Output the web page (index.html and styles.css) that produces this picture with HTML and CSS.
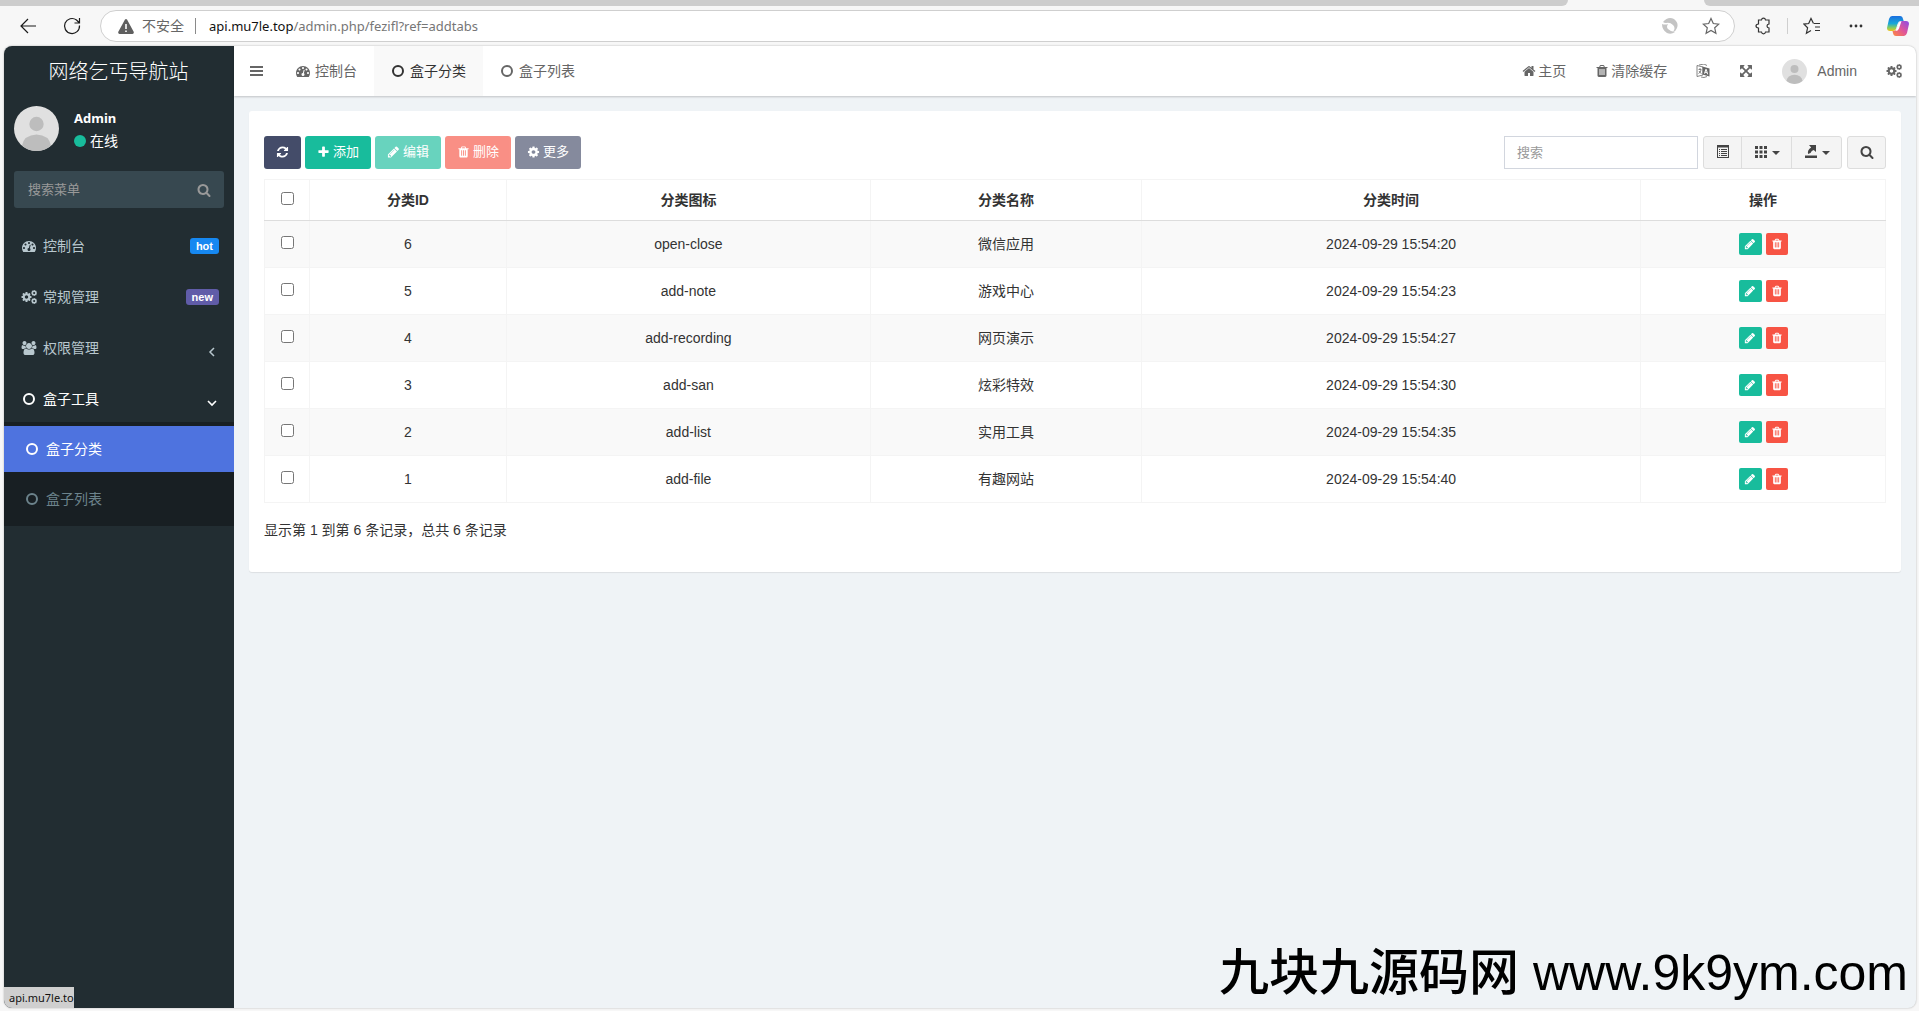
FILE: index.html
```html
<!DOCTYPE html>
<html lang="zh-CN">
<head>
<meta charset="utf-8">
<meta name="viewport" content="width=device-width, initial-scale=1">
<title>盒子分类</title>
<link rel="stylesheet" href="styles.css">
</head>
<body>
<svg class="sprite" aria-hidden="true">
  <symbol id="i-bars" viewBox="0 0 14 14"><path d="M0 2h13v2H0zM0 6h13v2H0zM0 10h13v2H0z"/></symbol>
  <symbol id="i-circle" viewBox="0 0 14 14"><circle cx="7" cy="7" r="5" fill="none" stroke="currentColor" stroke-width="2"/></symbol>
  <symbol id="i-dash" viewBox="0 0 1792 1792"><path d="M384 1152q0-53-37.500-90.500t-90.500-37.500-90.500 37.500-37.500 90.500 37.500 90.500 90.500 37.500 90.500-37.500 37.500-90.500zm192-448q0-53-37.500-90.500t-90.500-37.500-90.500 37.500-37.500 90.500 37.500 90.500 90.500 37.500 90.500-37.500 37.500-90.500zm428 481l101-382q6-26-7.500-48.500t-38.500-29.500-48 6.500-30 39.500l-101 382q-60 5-107 43.500t-63 98.500q-20 77 20 146t117 89 146-20 89-117q16-60-6-117t-72-91zm660-33q0-53-37.500-90.500t-90.500-37.500-90.500 37.500-37.500 90.500 37.500 90.500 90.500 37.500 90.500-37.500 37.500-90.500zm-640-640q0-53-37.500-90.500t-90.500-37.500-90.500 37.500-37.500 90.500 37.500 90.500 90.500 37.500 90.500-37.500 37.500-90.500zm448 192q0-53-37.500-90.500t-90.500-37.500-90.500 37.500-37.500 90.500 37.500 90.500 90.500 37.500 90.500-37.500 37.500-90.500zm320 448q0 261-141 483-19 29-54 29h-1402q-35 0-54-29-141-221-141-483 0-182 71-348t191-286 286-191 348-71 348 71 286 191 191 286 71 348z"/></symbol>
  <symbol id="i-cog" viewBox="0 0 1792 1792"><path id="gear" d="M1152 896q0-106-75-181t-181-75-181 75-75 181 75 181 181 75 181-75 75-181zm512-109v222q0 12-8 23t-20 13l-185 28q-19 54-39 91 35 50 107 138 10 12 10 25t-9 23q-27 37-99 108t-94 71q-12 0-26-9l-138-108q-44 23-91 38-16 136-29 186-7 28-36 28h-222q-14 0-24.500-8.500t-11.500-21.500l-28-184q-49-16-90-37l-141 107q-10 9-25 9-14 0-25-11-126-114-165-168-7-10-7-23 0-12 8-23 15-21 51-66.500t54-70.500q-27-50-41-99l-183-27q-13-2-21-12.500t-8-23.500v-222q0-12 8-23t19-13l186-28q14-46 39-92-40-57-107-138-10-12-10-24 0-10 9-23 26-36 98.500-107.500t94.500-71.500q13 0 26 10l138 107q44-23 91-38 16-136 29-186 7-28 36-28h222q14 0 24.500 8.500t11.500 21.500l28 184q49 16 90 37l142-107q9-9 24-9 13 0 25 10 129 119 165 170 7 8 7 22 0 12-8 23-15 21-51 66.500t-54 70.500q26 50 41 98l183 28q13 2 21 12.500t8 23.500z"/></symbol>
  <symbol id="i-cogs" viewBox="0 0 1920 1792"><use href="#gear" transform="translate(-107 149) scale(.833)"/><use href="#gear" transform="translate(1170 -60) scale(.5)"/><use href="#gear" transform="translate(1170 960) scale(.5)"/></symbol>
  <symbol id="i-users" viewBox="0 0 1920 1792"><path d="M593 896q-162 5-265 128h-134q-82 0-138-40.500t-56-118.500q0-353 124-353 6 0 43.500 21t97.500 42.500 119 21.500q67 0 133-23-5 37-5 66 0 139 81 256zm1071 637q0 120-73 189.500t-194 69.500h-874q-121 0-194-69.500t-73-189.500q0-53 3.500-103.500t14-109 26.500-108.500 43-97.500 62-81 85.500-53.500 111.500-20q10 0 43 21.500t73 48 107 48 135 21.500 135-21.500 107-48 73-48 43-21.500q61 0 111.500 20t85.500 53.500 62 81 43 97.500 26.500 108.500 14 109 3.500 103.500zm-1024-1277q0 106-75 181t-181 75-181-75-75-181 75-181 181-75 181 75 75 181zm704 384q0 159-112.500 271.500t-271.500 112.500-271.500-112.500-112.500-271.500 112.500-271.500 271.500-112.500 271.500 112.500 112.500 271.500zm576 225q0 78-56 118.500t-138 40.500h-134q-103-123-265-128 81-117 81-256 0-29-5-66 66 23 133 23 59 0 119-21.500t97.500-42.500 43.500-21q124 0 124 353zm-128-609q0 106-75 181t-181 75-181-75-75-181 75-181 181-75 181 75 75 181z"/></symbol>
  <symbol id="i-plus" viewBox="0 0 1792 1792"><path d="M1600 736v192q0 40-28 68t-68 28h-416v416q0 40-28 68t-68 28h-192q-40 0-68-28t-28-68v-416h-416q-40 0-68-28t-28-68v-192q0-40 28-68t68-28h416v-416q0-40 28-68t68-28h192q40 0 68 28t28 68v416h416q40 0 68 28t28 68z"/></symbol>
  <symbol id="i-pencil" viewBox="0 0 1792 1792"><path d="M491 1536l91-91-235-235-91 91v107h128v128h107zm523-928q0-22-22-22-10 0-17 7l-542 542q-7 7-7 17 0 22 22 22 10 0 17-7l542-542q7-7 7-17zm-54-192l416 416-832 832h-416v-416zm683 96q0 53-37 90l-166 166-416-416 166-165q36-38 90-38 53 0 91 38l235 234q37 39 37 91z"/></symbol>
  <symbol id="i-trash" viewBox="0 0 1792 1792"><path d="M704 1376v-704q0-14-9-23t-23-9h-64q-14 0-23 9t-9 23v704q0 14 9 23t23 9h64q14 0 23-9t9-23zm256 0v-704q0-14-9-23t-23-9h-64q-14 0-23 9t-9 23v704q0 14 9 23t23 9h64q14 0 23-9t9-23zm256 0v-704q0-14-9-23t-23-9h-64q-14 0-23 9t-9 23v704q0 14 9 23t23 9h64q14 0 23-9t9-23zm-544-992h448l-48-117q-7-9-17-11h-317q-10 2-17 11zm928 32v64q0 14-9 23t-23 9h-96v948q0 83-47 143.500t-113 60.500h-832q-66 0-113-58.500t-47-141.500v-952h-96q-14 0-23-9t-9-23v-64q0-14 9-23t23-9h309l70-167q15-37 54-63t79-26h320q40 0 79 26t54 63l70 167h309q14 0 23 9t9 23z"/></symbol>
  <symbol id="i-search" viewBox="0 0 1792 1792"><path d="M1216 832q0-185-131.500-316.500t-316.500-131.500-316.500 131.500-131.500 316.500 131.500 316.500 316.500 131.500 316.500-131.500 131.500-316.500zm512 832q0 52-38 90t-90 38q-54 0-90-38l-343-342q-179 124-399 124-143 0-273.500-55.500t-225-150-150-225-55.500-273.500 55.500-273.500 150-225 225-150 273.500-55.500 273.500 55.500 225 150 150 225 55.500 273.500q0 220-124 399l343 343q37 37 37 90z"/></symbol>
  <symbol id="i-refresh" viewBox="0 0 1792 1792"><path d="M1639 1056q0 5-1 7-64 268-268 434.500t-478 166.500q-146 0-282.500-55t-243.500-157l-129 129q-19 19-45 19t-45-19-19-45v-448q0-26 19-45t45-19h448q26 0 45 19t19 45-19 45l-137 137q71 66 161 102t187 36q134 0 250-65t186-179q11-17 53-117 8-23 30-23h192q13 0 22.500 9.500t9.500 22.500zm25-800v448q0 26-19 45t-45 19h-448q-26 0-45-19t-19-45 19-45l138-138q-148-137-349-137-134 0-250 65t-186 179q-11 17-53 117-8 23-30 23h-199q-13 0-22.500-9.500t-9.500-22.500v-7q65-268 270-434.500t480-166.500q146 0 284 55.500t245 156.500l130-129q19-19 45-19t45 19 19 45z"/></symbol>
  <symbol id="i-home" viewBox="0 0 1792 1792"><path d="M1472 992v480q0 26-19 45t-45 19h-384v-384h-256v384h-384q-26 0-45-19t-19-45v-480q0-1 .5-3t.5-3l575-474 575 474q1 2 1 6zm223-69l-62 74q-8 9-21 11h-3q-13 0-21-7l-692-577-692 577q-12 8-24 7-13-2-21-11l-62-74q-8-10-7-23.500t11-21.500l719-599q32-26 76-26t76 26l244 204v-195q0-14 9-23t23-9h192q14 0 23 9t9 23v408l219 182q10 8 11 21.500t-7 23.500z"/></symbol>
  <symbol id="i-arrows" viewBox="0 0 1792 1792"><path d="M1411 541l-355 355 355 355 144-144q29-31 70-14 39 17 39 59v448q0 26-19 45t-45 19h-448q-42 0-59-40-17-39 14-69l144-144-355-355-355 355 144 144q31 30 14 69-17 40-59 40h-448q-26 0-45-19t-19-45v-448q0-42 40-59 39-17 69 14l144 144 355-355-355-355-144 144q-19 19-45 19-12 0-24-5-40-17-40-59v-448q0-26 19-45t45-19h448q42 0 59 40 17 39-14 69l-144 144 355 355 355-355-144-144q-31-30-14-69 17-40 59-40h448q26 0 45 19t19 45v448q0 42-39 59-13 5-25 5-26 0-45-19z"/></symbol>
  <symbol id="i-lang" viewBox="0 0 14 14"><path d="M1 1.500 7 3v8l-6 1.500z" fill="none" stroke="currentColor" stroke-width=".8"/><path d="M2.500 5.500h3M4 4v1.500M5 6q-.5 2.500-2.500 3.500M3 7q1 2 2.500 2.500M3 1l5-1 3 1.500M5 13l3 .5 3-1" fill="none" stroke="currentColor" stroke-width=".8"/><path fill-rule="evenodd" d="M6.500 2.500 13.500 4.500v8l-7-2zM9.500 5 8 9.500l1 .3.300-1 1.600.4.300 1 1 .3L10.700 5.300zm.600 1.500.5 1.700-1-.2z"/></symbol>
  <symbol id="i-left" viewBox="0 0 10 10"><path d="M7 1 3 5l4 4" fill="none" stroke="currentColor" stroke-width="1.500"/></symbol>
  <symbol id="i-down" viewBox="0 0 10 10"><path d="M1 3l4 4 4-4" fill="none" stroke="currentColor" stroke-width="1.600"/></symbol>
  <symbol id="i-list" viewBox="0 0 14 14"><path fill-rule="evenodd" d="M1 0h12v13H1zM2 2.500V12h10V2.500z"/><path d="M3 4h1v1H3zM5 4h6v1H5zM3 6h1v1H3zM5 6h6v1H5zM3 8h1v1H3zM5 8h6v1H5zM3 10h1v1H3zM5 10h6v1H5z"/></symbol>
  <symbol id="i-grid" viewBox="0 0 14 14"><path d="M1 1h3v3H1zM5.500 1h3v3h-3zM10 1h3v3h-3zM1 5.500h3v3H1zM5.500 5.500h3v3h-3zM10 5.500h3v3h-3zM1 10h3v3H1zM5.500 10h3v3h-3zM10 10h3v3h-3z"/></symbol>
  <symbol id="i-export" viewBox="0 0 14 14"><path d="M1 10.500h12V13H1zM5 0h7v7L9.700 4.900Q7.500 5.500 6.500 8L4 9q-.8-4.500 3.200-6.500z"/></symbol>
  <symbol id="i-caret" viewBox="0 0 8 4"><path d="M0 0h8L4 4z"/></symbol>
  <symbol id="i-person" viewBox="0 0 45 45"><circle cx="22.500" cy="22.500" r="22.500" fill="#e0e0e0"/><circle cx="22.500" cy="18" r="7.200" fill="#bdbdbd"/><path d="M8 39.500Q10 29 22.500 28.500 35 29 37 39.500 31 45 22.500 45T8 39.500z" fill="#bdbdbd"/></symbol>
</svg>

<header class="browser">
  <div class="tabstrip"><span class="tab-rest tab-rest-left"></span><span class="tab-gap"></span><span class="tab-rest tab-rest-right"></span></div>
  <div class="toolbar">
    <button class="tool" type="button" aria-label="后退"><svg width="18" height="18" viewBox="0 0 18 18" class="line"><path d="M17 9H2M9 2 2 9l7 7"/></svg></button>
    <button class="tool tool-reload" type="button" aria-label="刷新"><svg width="18" height="18" viewBox="0 0 18 18" class="line"><path d="M16.500 8.500a7.500 7.500 0 1 1-3-5.500L16 5.500M16.500 1v5h-5"/></svg></button>
    <div class="address">
      <svg width="16" height="15" viewBox="0 0 16 15" class="warn"><path fill-rule="evenodd" d="M7 .6Q8-.6 9 .6L15.800 13Q16 14.800 14.500 15h-13Q0 14.800.2 13zM7.200 5v5h1.600V5zm0 6.500V13h1.600v-1.500z"/></svg>
      <span class="insecure">不安全</span>
      <span class="address-rule"></span>
      <span class="url"><b>api.mu7le.top</b>/admin.php/fezifl?ref=addtabs</span>
      <svg width="16" height="16" viewBox="0 0 16 16" class="swirl"><path d="M1 4Q6-2 12 1q5 4 3 9-1 3-4 4 3-4 0-7Q8 4 4 5 2 5 1 4z"/><path d="M0 6q3 1 6 0-2 3 0 5 3 3 7 3-4 3-8 1-5-3-5-9z"/></svg>
      <svg width="18" height="18" viewBox="0 0 18 18" class="line star"><path d="m9 1.500 2.300 5 5.500.6-4.100 3.700 1.200 5.500L9 13.500l-4.900 2.800 1.200-5.500L1.200 7.100l5.500-.6z"/></svg>
    </div>
    <div class="extras">
      <svg width="18" height="18" viewBox="0 0 18 18" class="line"><path d="M4.500 3h3q.3-1.800 2-1.800t2 1.800h3.500v4q-2 .3-2 2t2 2v4h-3.500q-.3 1.800-2 1.800t-2-1.800h-3v-4q-2.500-.2-2.500-2t2.500-2z"/></svg>
      <span class="address-rule"></span>
      <svg width="18" height="18" viewBox="0 0 18 18" class="line"><path d="M11 6.500h6M12 10h5M12 13.500h5M10.500 6.500 8 1.500l-2.300 5-4.700.6 3.600 3.700-1.200 5.500L8 13.500"/></svg>
      <svg width="18" height="18" viewBox="0 0 18 18"><circle cx="4" cy="9" r="1.400"/><circle cx="9" cy="9" r="1.400"/><circle cx="14" cy="9" r="1.400"/></svg>
      <svg width="22" height="20" viewBox="0 0 22 20">
        <defs>
          <linearGradient id="cool" x1="0" y1="0" x2="0" y2="1"><stop offset="0" stop-color="#1b6fe0"/><stop offset=".5" stop-color="#19a7d8"/><stop offset=".8" stop-color="#8bcf5a"/><stop offset="1" stop-color="#f2c21a"/></linearGradient>
          <linearGradient id="warm" x1="1" y1="0" x2="0" y2="1"><stop offset="0" stop-color="#8a4be8"/><stop offset=".5" stop-color="#e0559a"/><stop offset="1" stop-color="#ff8a3c"/></linearGradient>
        </defs>
        <path d="M5 0h8q2.500 0 3 3l.7 2h-3.200q-2 0-3 3l-1.500 5q-1 2-3 2H3q-3 0-3-3l2-9q1-3 3-3z" fill="url(#cool)"/>
        <path d="M17 20H9q-2.500 0-3-3l-.5-2h1.500q2 0 3-3l2-5q.5-2 2-2h5q3 0 3 3l-2 9q-1 3-3 3z" fill="url(#warm)"/>
        <path d="M11.500 7.500q.7-2.500 3-2.500l-2.500 7.500q-1 2.500-3.500 2.500z" fill="#fff"/>
      </svg>
    </div>
  </div>
</header>

<div class="frame">
  <aside class="sidebar">
    <a class="logo" href="#">网络乞丐导航站</a>
    <div class="user">
      <svg class="avatar"><use href="#i-person"/></svg>
      <div class="user-info">
        <strong>Admin</strong>
        <span class="online"><i class="dot"></i>在线</span>
      </div>
    </div>
    <form class="menu-search">
      <input type="text" placeholder="搜索菜单" aria-label="搜索菜单">
      <button type="button" aria-label="搜索菜单"><svg class="icon"><use href="#i-search"/></svg></button>
    </form>
    <nav class="menu">
      <a class="menu-item" href="#"><svg class="icon icon-wide"><use href="#i-dash"/></svg>控制台<span class="badge badge-hot">hot</span></a>
      <a class="menu-item" href="#"><svg class="icon icon-wide"><use href="#i-cogs"/></svg>常规管理<span class="badge badge-new">new</span></a>
      <a class="menu-item" href="#"><svg class="icon icon-wide"><use href="#i-users"/></svg>权限管理<svg class="chevron"><use href="#i-left"/></svg></a>
      <a class="menu-item open" href="#"><svg class="icon icon-wide"><use href="#i-circle"/></svg>盒子工具<svg class="chevron"><use href="#i-down"/></svg></a>
      <div class="submenu">
        <a class="active" href="#"><svg class="icon"><use href="#i-circle"/></svg>盒子分类</a>
        <a href="#"><svg class="icon"><use href="#i-circle"/></svg>盒子列表</a>
      </div>
    </nav>
  </aside>

  <div class="content">
    <nav class="topbar">
      <button class="burger" type="button" aria-label="菜单"><svg class="icon"><use href="#i-bars"/></svg></button>
      <a class="page-tab" href="#"><svg class="icon"><use href="#i-dash"/></svg>控制台</a>
      <a class="page-tab current" href="#"><svg class="icon"><use href="#i-circle"/></svg>盒子分类</a>
      <a class="page-tab" href="#"><svg class="icon"><use href="#i-circle"/></svg>盒子列表</a>
      <div class="top-links">
        <a href="#"><svg class="icon"><use href="#i-home"/></svg>主页</a>
        <a href="#"><svg class="icon"><use href="#i-trash"/></svg>清除缓存</a>
        <a href="#" aria-label="语言"><svg class="icon"><use href="#i-lang"/></svg></a>
        <a href="#" aria-label="全屏"><svg class="icon"><use href="#i-arrows"/></svg></a>
        <a class="account" href="#"><svg class="avatar-small"><use href="#i-person"/></svg>Admin</a>
        <a href="#" aria-label="设置"><svg class="icon icon-wide"><use href="#i-cogs"/></svg></a>
      </div>
    </nav>

    <main class="panel">
      <div class="actions">
        <button class="btn dark" type="button" aria-label="刷新"><svg class="icon"><use href="#i-refresh"/></svg></button>
        <button class="btn green" type="button"><svg class="icon"><use href="#i-plus"/></svg>添加</button>
        <button class="btn green faded" type="button"><svg class="icon"><use href="#i-pencil"/></svg>编辑</button>
        <button class="btn red faded" type="button"><svg class="icon"><use href="#i-trash"/></svg>删除</button>
        <button class="btn dark faded" type="button"><svg class="icon"><use href="#i-cog"/></svg>更多</button>
        <input class="search" type="text" placeholder="搜索" aria-label="搜索">
        <div class="group">
          <button type="button" aria-label="视图"><svg class="icon"><use href="#i-list"/></svg></button>
          <button type="button" aria-label="列"><svg class="icon"><use href="#i-grid"/></svg><svg class="caret"><use href="#i-caret"/></svg></button>
          <button type="button" aria-label="导出"><svg class="icon"><use href="#i-export"/></svg><svg class="caret"><use href="#i-caret"/></svg></button>
        </div>
        <div class="group">
          <button type="button" aria-label="高级搜索"><svg class="icon"><use href="#i-search"/></svg></button>
        </div>
      </div>

      <table class="grid">
        <colgroup><col class="c-check"><col class="c-id"><col class="c-icon"><col class="c-name"><col class="c-time"><col class="c-ops"></colgroup>
        <thead>
          <tr><th><input type="checkbox" aria-label="全选"></th><th>分类ID</th><th>分类图标</th><th>分类名称</th><th>分类时间</th><th>操作</th></tr>
        </thead>
        <tbody>
          <tr><td><input type="checkbox" aria-label="选择 6"></td><td>6</td><td>open-close</td><td>微信应用</td><td>2024-09-29 15:54:20</td><td><div class="ops"><button class="op green" type="button" aria-label="编辑"><svg><use href="#i-pencil"/></svg></button><button class="op red" type="button" aria-label="删除"><svg><use href="#i-trash"/></svg></button></div></td></tr>
          <tr><td><input type="checkbox" aria-label="选择 5"></td><td>5</td><td>add-note</td><td>游戏中心</td><td>2024-09-29 15:54:23</td><td><div class="ops"><button class="op green" type="button" aria-label="编辑"><svg><use href="#i-pencil"/></svg></button><button class="op red" type="button" aria-label="删除"><svg><use href="#i-trash"/></svg></button></div></td></tr>
          <tr><td><input type="checkbox" aria-label="选择 4"></td><td>4</td><td>add-recording</td><td>网页演示</td><td>2024-09-29 15:54:27</td><td><div class="ops"><button class="op green" type="button" aria-label="编辑"><svg><use href="#i-pencil"/></svg></button><button class="op red" type="button" aria-label="删除"><svg><use href="#i-trash"/></svg></button></div></td></tr>
          <tr><td><input type="checkbox" aria-label="选择 3"></td><td>3</td><td>add-san</td><td>炫彩特效</td><td>2024-09-29 15:54:30</td><td><div class="ops"><button class="op green" type="button" aria-label="编辑"><svg><use href="#i-pencil"/></svg></button><button class="op red" type="button" aria-label="删除"><svg><use href="#i-trash"/></svg></button></div></td></tr>
          <tr><td><input type="checkbox" aria-label="选择 2"></td><td>2</td><td>add-list</td><td>实用工具</td><td>2024-09-29 15:54:35</td><td><div class="ops"><button class="op green" type="button" aria-label="编辑"><svg><use href="#i-pencil"/></svg></button><button class="op red" type="button" aria-label="删除"><svg><use href="#i-trash"/></svg></button></div></td></tr>
          <tr><td><input type="checkbox" aria-label="选择 1"></td><td>1</td><td>add-file</td><td>有趣网站</td><td>2024-09-29 15:54:40</td><td><div class="ops"><button class="op green" type="button" aria-label="编辑"><svg><use href="#i-pencil"/></svg></button><button class="op red" type="button" aria-label="删除"><svg><use href="#i-trash"/></svg></button></div></td></tr>
        </tbody>
      </table>
      <p class="summary">显示第 1 到第 6 条记录，总共 6 条记录</p>
    </main>
  </div>

  <div class="status">api.mu7le.to</div>
  <div class="watermark">九块九源码网 www.9k9ym.com</div>
</div>
</body>
</html>
```

FILE: styles.css
```css
* {
  box-sizing: border-box;
}

body {
  margin: 0;
  min-height: 100vh;
  display: flex;
  flex-direction: column;
  background: #f7f7f7;
  color: #333;
  font: 14px/20px "Liberation Sans", "Noto Sans CJK SC", sans-serif;
}

a {
  color: inherit;
  text-decoration: none;
}

button,
input {
  font: inherit;
  color: inherit;
}

button {
  border: 0;
  padding: 0;
  background: none;
  cursor: pointer;
}

svg {
  flex: none;
  fill: currentColor;
}

.sprite {
  display: none;
}

.icon {
  width: 14px;
  height: 14px;
}

.icon-wide {
  width: 16px;
}

/* Browser chrome */
.tabstrip {
  display: flex;
  height: 6px;
}

.tab-rest {
  background: #cdcdcd;
}

.tab-rest-left {
  flex: 1;
  border-bottom-right-radius: 6px;
}

.tab-gap {
  width: 136px;
}

.tab-rest-right {
  width: 215px;
  border-bottom-left-radius: 6px;
}

.toolbar {
  display: flex;
  align-items: center;
  height: 40px;
  padding: 0 10px 0 19px;
}

.line {
  fill: none;
  stroke: currentColor;
  stroke-width: 1.2;
}

.tool {
  display: flex;
  width: 18px;
  color: #1b1b1b;
}

.tool-reload {
  margin: 0 27px 0 26px;
}

.address {
  flex: 1;
  display: flex;
  align-items: center;
  height: 32px;
  padding: 0 14px 0 17px;
  margin-left: -8px;
  border: 1px solid #cfcfcf;
  border-radius: 16px;
  background: #fff;
}

.warn {
  margin-right: 8px;
  color: #5f5f5f;
}

.insecure {
  color: #666;
}

.address-rule {
  width: 1px;
  height: 16px;
  margin: 0 13px 0 11px;
  background: #8a8a8a;
}

.url {
  flex: 1;
  color: #767676;
  font: 13px/20px "Noto Sans", sans-serif;
}

.url b {
  color: #111;
  font-weight: 400;
}

.swirl {
  color: #c4c4c4;
}

.star {
  margin-left: 24px;
  color: #666;
}

.extras {
  display: flex;
  align-items: center;
  margin-left: 19px;
}

.extras .address-rule {
  margin: 0 15px;
  background: #cfcfcf;
}

.extras svg + svg {
  margin-left: 26px;
}

.extras svg:last-child {
  margin-left: 22px;
}

/* Page frame */
.frame {
  position: relative;
  flex: 1;
  display: flex;
  margin: 0 3px 3px 4px;
  border-radius: 8px;
  overflow: hidden;
  background: #eff3f6;
  box-shadow: 0 0 2px rgba(0, 0, 0, .3);
}

/* Sidebar */
.sidebar {
  width: 230px;
  flex: none;
  background: #222d32;
  color: #b8c7ce;
}

.logo {
  display: block;
  height: 50px;
  padding-right: 1px;
  color: #fff;
  font-size: 20px;
  font-weight: 300;
  line-height: 52px;
  text-align: center;
}

.user {
  display: flex;
  gap: 15px;
  padding: 10px;
  color: #fff;
}

.avatar {
  width: 45px;
  height: 45px;
}

.user-info {
  display: flex;
  flex-direction: column;
  gap: 3px;
  padding-top: 2px;
}

.user-info strong {
  font-family: "Noto Sans", sans-serif;
  font-size: 13px;
}

.online {
  display: flex;
  align-items: center;
  gap: 4px;
}

.dot {
  width: 12px;
  height: 12px;
  border-radius: 50%;
  background: #18bc9c;
}

.menu-search {
  display: flex;
  height: 37px;
  margin: 10px;
  border-radius: 3px;
  background: #374850;
  color: #999;
}

.menu-search input {
  flex: 1;
  min-width: 0;
  padding: 0 14px;
  border: 0;
  background: none;
  font-size: 13px;
}

::placeholder {
  color: #999;
  opacity: 1;
}

.menu-search button {
  display: flex;
  align-items: center;
  padding-right: 13px;
}

.menu-item {
  display: flex;
  align-items: center;
  height: 51px;
  padding: 5px 15px 0 17px;
}

.menu-item .icon {
  margin-right: 6px;
}

.open {
  color: #fff;
}

.badge {
  margin-left: auto;
  padding: 0 6px;
  border-radius: 3px;
  color: #fff;
  font-size: 11px;
  font-weight: 700;
  line-height: 16px;
}

.badge-hot {
  background: #1688f1;
}

.badge-new {
  background: #605ca8;
}

.chevron {
  width: 10px;
  height: 10px;
  margin: 7px 2px 0 auto;
}

.submenu {
  display: flex;
  flex-direction: column;
  gap: 4px;
  padding: 4px 0;
  background: #181f23;
  color: #6c838c;
}

.submenu a {
  display: flex;
  align-items: center;
  gap: 7px;
  height: 46px;
  padding-left: 21px;
}

.submenu .active {
  background: #4e73df;
  color: #fff;
}

/* Top bar */
.content {
  flex: 1;
  min-width: 0;
}

.topbar {
  display: flex;
  height: 50px;
  background: #fff;
  color: #666;
  box-shadow: 0 1px 2px rgba(0, 0, 0, .2);
}

.burger {
  display: flex;
  align-items: center;
  justify-content: center;
  width: 45px;
}

.page-tab {
  display: flex;
  align-items: center;
  gap: 5px;
  padding: 0 17px;
}

.current {
  background: #f9f9f9;
  color: #333;
}

.top-links {
  display: flex;
  gap: 29px;
  margin-left: auto;
  padding-right: 14px;
}

.top-links a {
  display: flex;
  align-items: center;
  gap: 2px;
}

.top-links .account {
  gap: 10px;
}

.avatar-small {
  width: 25px;
  height: 25px;
}

/* Table panel */
.panel {
  margin: 15px;
  padding: 25px 15px 32px;
  border-radius: 3px;
  background: #fff;
  box-shadow: 0 1px 1px rgba(0, 0, 0, .08);
}

.actions {
  display: flex;
  gap: 4px;
  height: 33px;
}

.btn {
  display: flex;
  align-items: center;
  gap: 3px;
  padding: 0 12px 2px;
  border-radius: 3px;
  color: #fff;
  font-size: 13px;
}

.btn .icon {
  width: 13px;
}

.green {
  background: #18bc9c;
}

.red {
  background: #f75444;
}

.dark {
  background: #444c69;
}

.faded {
  opacity: .65;
}

.search {
  width: 194px;
  margin: 0 1px 0 auto;
  padding: 0 12px;
  border: 1px solid #d2d6de;
  font-size: 13px;
}

.group {
  display: flex;
  border: 1px solid #ddd;
  border-radius: 3px;
  background: #f4f4f4;
  color: #444;
}

.group + .group {
  margin-left: 1px;
}

.group button {
  display: flex;
  align-items: center;
  gap: 4px;
  padding: 0 11px 2px 12px;
}

.group button + button {
  border-left: 1px solid #ddd;
}

.caret {
  width: 8px;
  height: 4px;
  margin-top: 3px;
}

.grid {
  width: 100%;
  margin-top: 10px;
  border-collapse: collapse;
  table-layout: fixed;
  text-align: center;
}

.c-check { width: 44px; }
.c-id { width: 12.1%; }
.c-icon { width: 22.5%; }
.c-name { width: 16.7%; }
.c-time { width: 30.8%; }
.c-ops { width: 15.1%; }

.grid th,
.grid td {
  padding: 0;
  border: 1px solid #f4f4f4;
}

.grid th {
  height: 41px;
  border-bottom-color: #ddd;
}

.grid td {
  height: 47px;
}

.grid tbody tr:nth-child(odd) {
  background: #f9f9f9;
}

.grid input {
  display: block;
  width: 13px;
  height: 13px;
  margin: 0 auto 3px;
}

.ops {
  display: flex;
  justify-content: center;
  gap: 4px;
}

.op {
  display: flex;
  align-items: center;
  justify-content: center;
  width: 22px;
  height: 22px;
  border-radius: 2px;
  color: #fff;
}

.op.green {
  width: 23px;
}

.op svg {
  width: 12px;
  height: 12px;
}

.summary {
  margin: 17px 0 0;
}

/* Overlays */
.status {
  position: absolute;
  left: 0;
  bottom: 0;
  padding: 0 0 0 5px;
  background: #cfcfcf;
  color: #111;
  font: 11px/21px "Noto Sans", sans-serif;
  white-space: nowrap;
}

.watermark {
  position: absolute;
  right: 8px;
  bottom: 0;
  color: #000;
  font-size: 50px;
  font-weight: 500;
  line-height: 70px;
  white-space: nowrap;
}
```
